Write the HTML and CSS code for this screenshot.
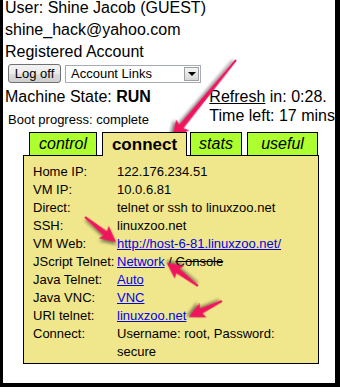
FILE: index.html
```html
<!DOCTYPE html>
<html lang="en">

<head>
    <meta charset="UTF-8" />
    <title>linuxzoo - connect</title>
    <link rel="stylesheet" href="styles.css">
</head>

<body>
    <div class="frame">
        <!-- User info -->
        <div class="user">
            User: Shine Jacob (GUEST)<br>
            shine_hack@yahoo.com<br>
            Registered Account
        </div>

        <div class="controls">
            <button class="btn">Log off</button>
            <div class="select">
                <span class="select-text">Account Links</span>
                <span class="drop"><span class="tri"></span></span>
            </div>
        </div>

        <!-- Machine status -->
        <div class="status">
            <div class="status-left">
                <div class="state">Machine State: <b>RUN</b></div>
                <div class="boot">Boot progress: complete</div>
            </div>
            <div class="status-right">
                <div><a class="refresh" href="#">Refresh</a> in: 0:28.</div>
                <div>Time left: 17 mins</div>
            </div>
        </div>

        <!-- Tabs -->
        <div class="tabs">
            <div class="tab tab-control">control</div>
            <div class="tab tab-connect active">connect</div>
            <div class="tab tab-stats">stats</div>
            <div class="tab tab-useful">useful</div>
        </div>

        <div class="panel">
            <div class="row"><span class="label">Home IP:</span><span>122.176.234.51</span></div>
            <div class="row"><span class="label">VM IP:</span><span>10.0.6.81</span></div>
            <div class="row"><span class="label">Direct:</span><span>telnet or ssh to linuxzoo.net</span></div>
            <div class="row"><span class="label">SSH:</span><span>linuxzoo.net</span></div>
            <div class="row"><span class="label">VM Web:</span><span><a href="#">http://host-6-81.linuxzoo.net/</a></span></div>
            <div class="row"><span class="label">JScript Telnet:</span><span><a href="#">Network</a> / <s>Console</s></span></div>
            <div class="row"><span class="label">Java Telnet:</span><span><a href="#">Auto</a></span></div>
            <div class="row"><span class="label">Java VNC:</span><span><a href="#">VNC</a></span></div>
            <div class="row"><span class="label">URI telnet:</span><span><a href="#">linuxzoo.net</a></span></div>
            <div class="row"><span class="label">Connect:</span><span>Username: root, Password: secure</span></div>
        </div>
    </div>

    <!-- Pointer arrows -->
    <svg class="arrows" width="340" height="392" viewBox="0 0 340 392">
        <g class="arrow" transform="translate(236 60) rotate(129.4)">
            <path d="M0,-1 L86,-2.8 L84,-8.5 L101,0 L84,8.5 L86,2.8 L0,1 Z" />
        </g>
        <g class="arrow" transform="translate(85 217) rotate(38.9)">
            <path d="M0,-1 L26,-2.8 L24,-8 L40,0 L24,8 L26,2.8 L0,1 Z" />
        </g>
        <g class="arrow" transform="translate(198 286) rotate(-143.4)">
            <path d="M0,-1 L25,-2.8 L23,-8 L39,0 L23,8 L25,2.8 L0,1 Z" />
        </g>
        <g class="arrow" transform="translate(222 301) rotate(154.1)">
            <path d="M0,-1 L23,-2.8 L21,-8 L37,0 L21,8 L23,2.8 L0,1 Z" />
        </g>
    </svg>
</body>

</html>
```

FILE: styles.css
```css
body {
    margin: 0;
    padding: 0;
    font-family: "Liberation Sans", Arial, sans-serif;
    color: #000;
    background: #fff;
    position: relative;
}

.frame {
    box-sizing: border-box;
    width: 340px;
    height: 387px;
    padding-left: 2px;
    border-left: 3px solid #000;
    border-right: 5px solid #000;
    border-bottom: 4px solid #000;
    overflow: hidden;
    white-space: nowrap;
}

.user {
    font-size: 16px;
    line-height: 22px;
    margin-top: -3px;
}

.controls {
    display: flex;
    align-items: center;
    margin-top: 1px;
    height: 19px;
}

.btn {
    box-sizing: border-box;
    height: 19px;
    width: 53px;
    margin-left: 3px;
    padding: 0;
    font-family: "Liberation Sans", Arial, sans-serif;
    font-size: 13px;
    color: #000;
    border: 1px solid #707070;
    border-radius: 3px;
    background: linear-gradient(#f2f2f2, #ebebeb 50%, #dddddd 50%, #cfcfcf);
}

.select {
    box-sizing: border-box;
    display: flex;
    align-items: center;
    height: 18px;
    width: 136px;
    margin-left: 4px;
    border: 1px solid #a5acb5;
    background: #fff;
    font-size: 13px;
}

.select-text {
    flex: 1;
    padding-left: 5px;
}

.drop {
    box-sizing: border-box;
    width: 15px;
    height: 14px;
    margin-right: 1px;
    border: 1px solid #a0a0a0;
    background: linear-gradient(#f4f4f4, #d8d8d8);
    display: flex;
    align-items: center;
    justify-content: center;
}

.tri {
    width: 0;
    height: 0;
    border-left: 4px solid transparent;
    border-right: 4px solid transparent;
    border-top: 4px solid #000;
}

.status {
    display: flex;
    margin-top: 4px;
    font-size: 16px;
    line-height: 19px;
}

.status-left {
    width: 208px;
}

.boot {
    font-size: 13px;
    line-height: 18px;
    margin-top: 5px;
    padding-left: 3px;
}

.refresh {
    color: #000;
    text-decoration: underline;
}

.tabs {
    display: flex;
    align-items: flex-end;
    height: 23px;
    margin-top: 3px;
    margin-left: 24px;
    position: relative;
    z-index: 1;
}

.tab {
    box-sizing: border-box;
    height: 23px;
    border: 1px solid #000;
    border-bottom: none;
    background: #adff2f;
    font-size: 16px;
    font-style: italic;
    line-height: 22px;
    text-align: center;
}

.tab-control {
    width: 68px;
}

.tab-connect {
    width: 85px;
    margin-left: 5px;
    height: 24px;
    margin-bottom: -1px;
    background: #f0e68c;
    font-style: normal;
    font-weight: bold;
    font-size: 17px;
    line-height: 24px;
}

.tab-stats {
    width: 52px;
    margin-left: 3px;
}

.tab-useful {
    width: 71px;
    margin-left: 5px;
}

.panel {
    box-sizing: border-box;
    width: 296px;
    height: 209px;
    margin-left: 18px;
    padding: 7px 8px 0 9px;
    border: 1px solid #000;
    background: #f0e68c;
    font-size: 13px;
    line-height: 18px;
    white-space: normal;
}

.row {
    display: flex;
}

.label {
    flex: 0 0 84px;
    white-space: nowrap;
}

.panel a {
    color: #0000ee;
}

.arrows {
    position: absolute;
    top: 0;
    left: 0;
    pointer-events: none;
}

.arrow path {
    fill: #f0145c;
    filter: drop-shadow(2px 2px 1.5px rgba(0, 0, 0, 0.45));
}
```
